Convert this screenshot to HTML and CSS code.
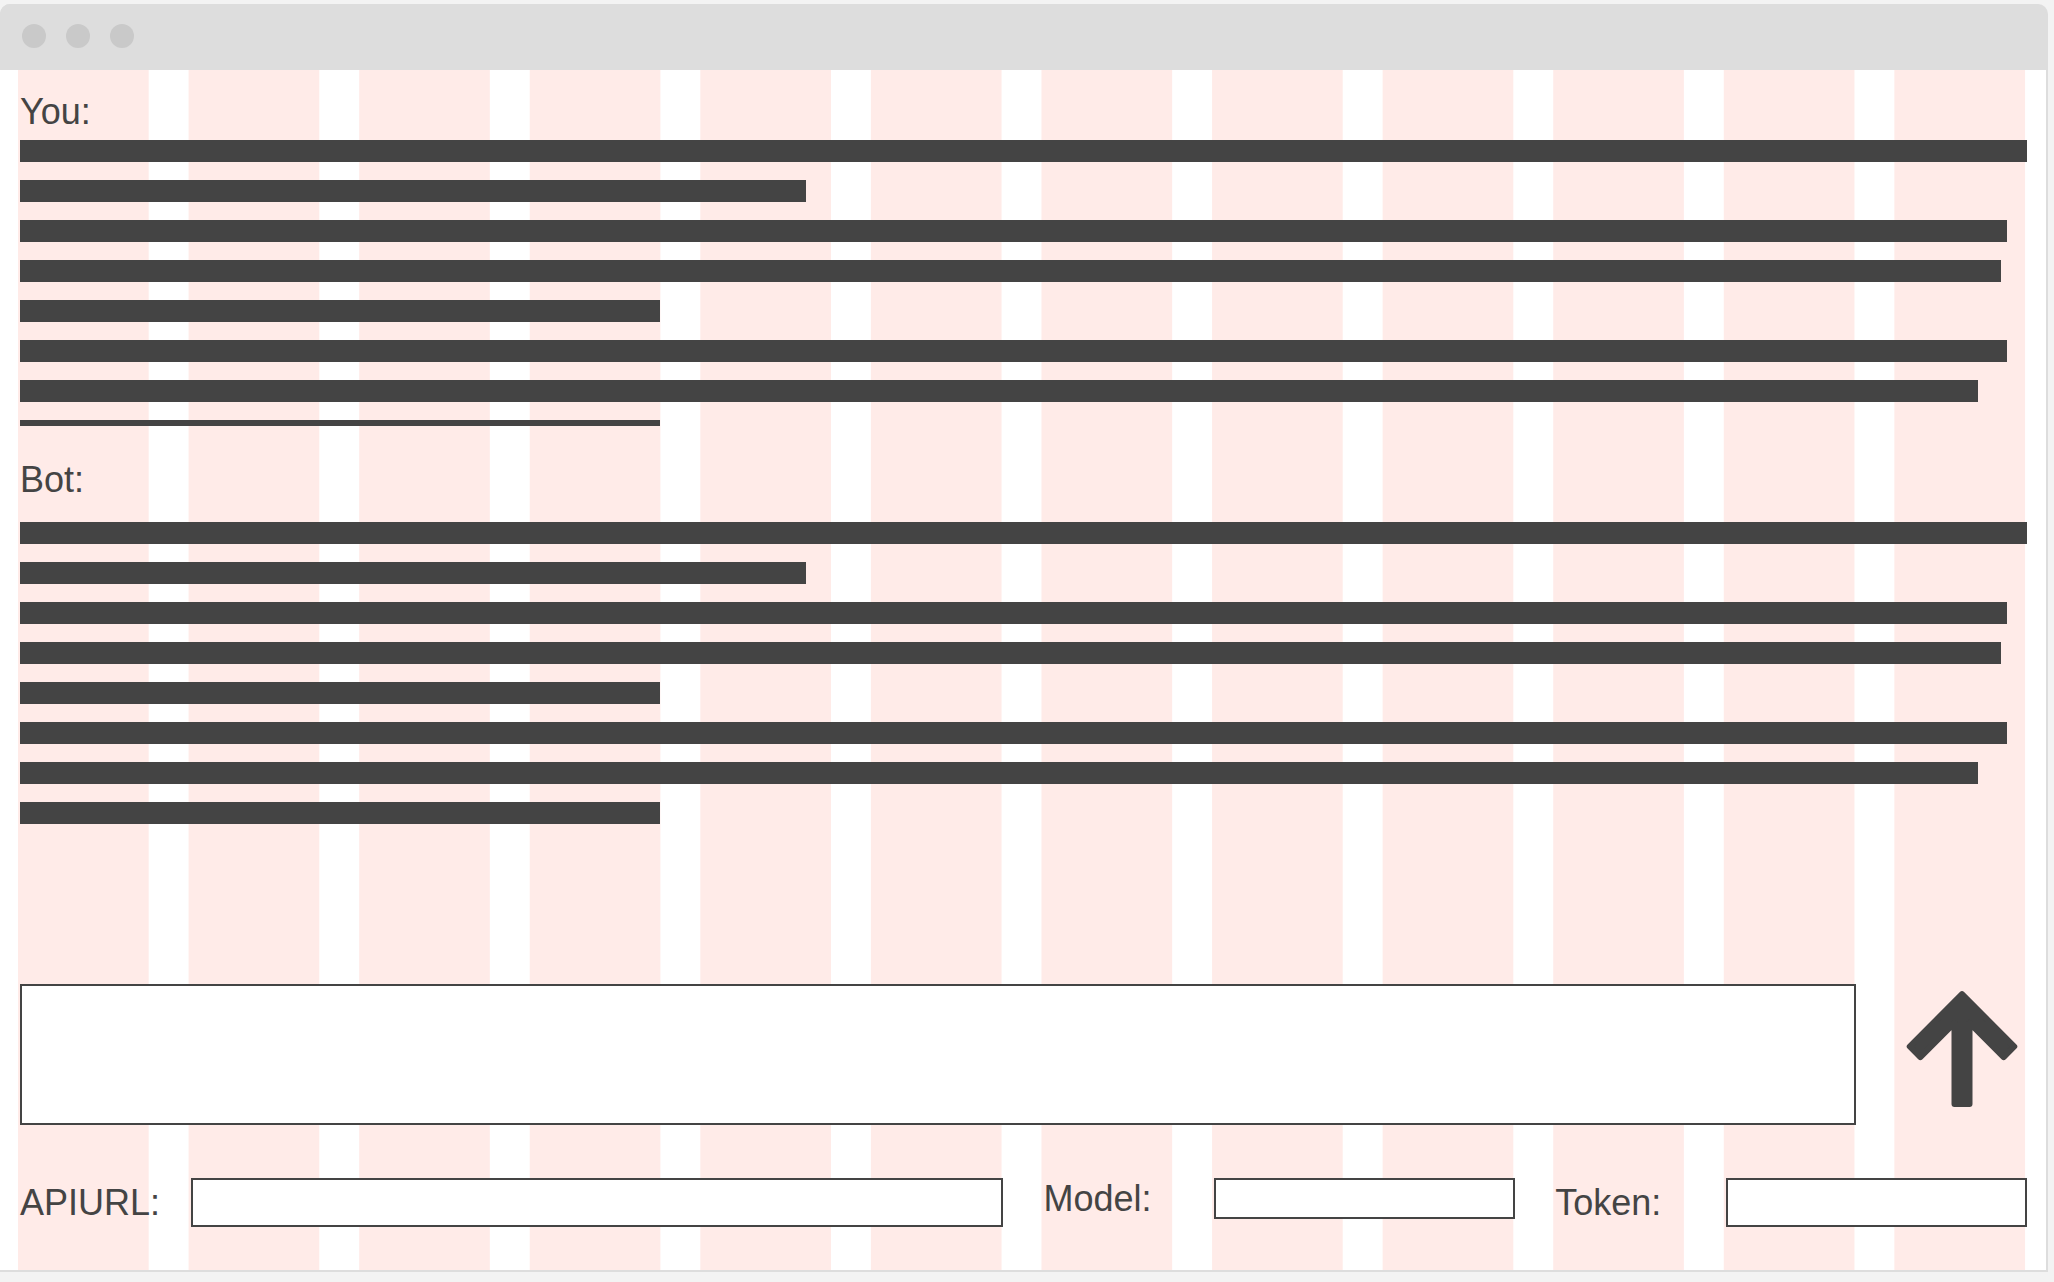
FILE: index.html
```html
<!DOCTYPE html>
<html lang="en">
<head>
<meta charset="utf-8">
<title>Chat wireframe</title>
<link rel="stylesheet" href="styles.css">
</head>
<body>
<div class="window">
  <div class="titlebar">
    <span class="dot"></span><span class="dot"></span><span class="dot"></span>
  </div>
  <div class="win-body">
    <div class="label label-you">You:</div>
    <div class="msg msg-you">
      <div class="bar w1"></div>
      <div class="bar w2"></div>
      <div class="bar w3"></div>
      <div class="bar w4"></div>
      <div class="bar w5"></div>
      <div class="bar w3"></div>
      <div class="bar w7"></div>
      <div class="bar w5"></div>
    </div>
    <div class="label label-bot">Bot:</div>
    <div class="msg msg-bot">
      <div class="bar w1"></div>
      <div class="bar w2"></div>
      <div class="bar w3"></div>
      <div class="bar w4"></div>
      <div class="bar w5"></div>
      <div class="bar w3"></div>
      <div class="bar w7"></div>
      <div class="bar w5"></div>
    </div>
    <div class="compose">
      <textarea class="prompt"></textarea>
      <button class="send" type="button" aria-label="Send">
        <svg width="120" height="124" viewBox="-60 -2 120 124" aria-hidden="true">
          <path d="M0 4.24 L52.26 56.5 L41.65 67.11 L7.5 32.96 L7.5 114 L-7.5 114 L-7.5 32.96 L-41.65 67.11 L-52.26 56.5 Z" fill="#444" stroke="#444" stroke-width="6" stroke-linejoin="round"/>
        </svg>
      </button>
    </div>
    <div class="settings">
      <label class="field-label tall">APIURL:</label>
      <input class="field f-api" type="text">
      <label class="field-label short">Model:</label>
      <input class="field f-model" type="text">
      <label class="field-label tall">Token:</label>
      <input class="field f-token" type="text">
    </div>
  </div>
</div>
</body>
</html>
```

FILE: styles.css
```css
html, body {
  margin: 0;
  padding: 0;
}

body {
  background: #f3f3f3;
  font-family: "Liberation Sans", Arial, sans-serif;
  color: #444;
  width: 2054px;
  height: 1282px;
  overflow: hidden;
}

.window {
  margin-top: 4px;
  width: 2046px;
  padding: 0 2px 2px 0;
  background: #dddddd;
  border-radius: 10px 10px 0 0;
}

.titlebar {
  height: 66px;
  box-sizing: border-box;
  padding: 20px 0 0 22px;
  display: flex;
  gap: 20px;
  align-items: flex-start;
  background: #dddddd;
  border-radius: 10px 10px 0 0;
}

.dot {
  width: 24px;
  height: 24px;
  border-radius: 50%;
  background: #c9c9c9;
}

.win-body {
  height: 1200px;
  box-sizing: border-box;
  padding: 0 19px 0 20px;
  display: flex;
  flex-direction: column;
  background-color: #ffffff;
  background-image: linear-gradient(to right, #ffebe8 0, #ffebe8 calc(100% - 40px), transparent calc(100% - 40px));
  background-origin: content-box;
  background-clip: border-box;
  background-size: calc((100% + 40px) / 12) 100%;
  background-position: -2px 0;
  background-repeat: repeat;
}

.label {
  font-size: 36px;
  line-height: 34px;
  height: 34px;
}

.label-you {
  margin-top: 25px;
}

.label-bot {
  margin-top: 37px;
}

.msg {
  display: flex;
  flex-direction: column;
  gap: 18px;
}

.msg-you {
  margin-top: 11px;
  height: 286px;
  overflow: hidden;
}

.msg-bot {
  margin-top: 25px;
}

.bar {
  height: 22px;
  flex: none;
  background: #444;
}

.w1 { width: 2007px; }
.w2 { width: 786px; }
.w3 { width: 1987px; }
.w4 { width: 1981px; }
.w5 { width: 640px; }
.w7 { width: 1958px; }

.compose {
  margin-top: 160px;
  display: grid;
  grid-template-columns: repeat(12, minmax(0, 1fr));
  column-gap: 40px;
  align-items: start;
}

.prompt {
  grid-column: 1 / span 11;
  height: 141px;
  box-sizing: border-box;
  margin: 0;
  border: 2px solid #444;
  background: #fff;
  resize: none;
  font: inherit;
  padding: 0;
}

.send {
  grid-column: 12;
  justify-self: center;
  margin-top: 4px;
  padding: 0;
  border: 0;
  background: transparent;
  display: block;
  line-height: 0;
  cursor: pointer;
}

.settings {
  margin-top: 53px;
  display: grid;
  grid-template-columns: repeat(12, minmax(0, 1fr));
  column-gap: 40px;
  align-items: start;
}

.field-label {
  display: flex;
  align-items: center;
  font-size: 36px;
  line-height: 34px;
  white-space: nowrap;
}

.field-label.tall { height: 49px; }
.field-label.short { height: 41px; }

.field {
  box-sizing: border-box;
  margin: 0;
  padding: 0;
  border: 2px solid #444;
  background: #fff;
  font: inherit;
  min-width: 0;
  width: 100%;
}

.f-api {
  grid-column: 2 / span 5;
  height: 49px;
}

.f-model {
  grid-column: 8 / span 2;
  height: 41px;
}

.f-token {
  grid-column: 11 / span 2;
  height: 49px;
}
```
